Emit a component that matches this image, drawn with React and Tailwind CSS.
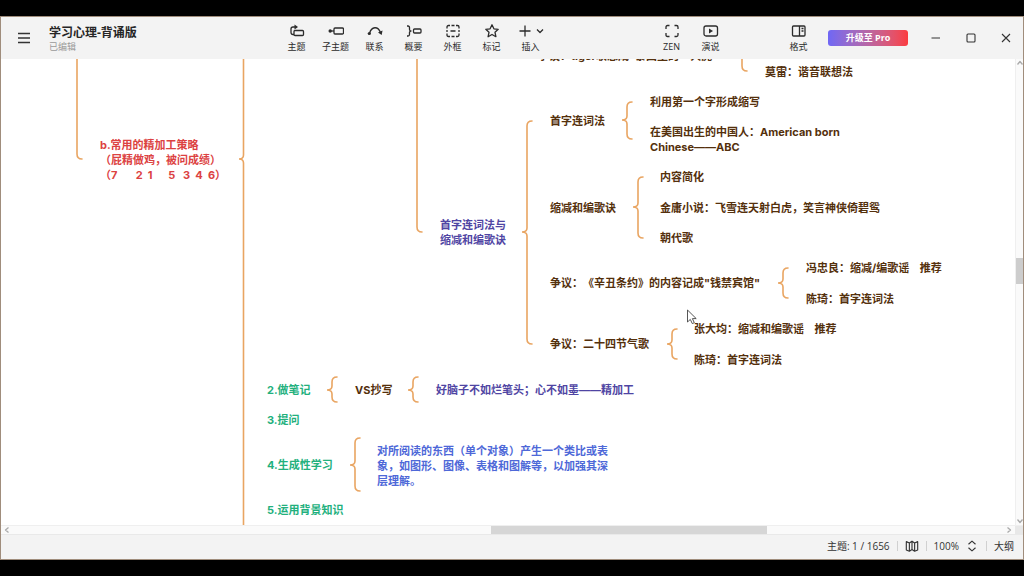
import React from 'react';

const nodeColors = {
  brown: 'text-[#54300c]',
  purple: 'text-[#4f45a3]',
  blue: 'text-[#4e68d8]',
  green: 'text-[#22b07d]',
  red: 'text-[#dc4242]',
};

// x, y: top left corner of the topic on the canvas
const topics = [
  { x: 537, y: -10, color: 'brown', lines: ['争议：tiger联想成"泰国里的"  大虎'] },
  { x: 764, y: 6, color: 'brown', lines: ['莫雷：谐音联想法'] },
  { x: 549, y: 55, color: 'brown', lines: ['首字连词法'] },
  { x: 649, y: 36, color: 'brown', lines: ['利用第一个字形成缩写'] },
  { x: 649, y: 66, color: 'brown', lines: ['在美国出生的中国人：American born', 'Chinese——ABC'] },
  { x: 549, y: 142, color: 'brown', lines: ['缩减和编歌诀'] },
  { x: 659, y: 111, color: 'brown', lines: ['内容简化'] },
  { x: 659, y: 142, color: 'brown', lines: ['金庸小说：飞雪连天射白虎，笑言神侠倚碧鸳'] },
  { x: 659, y: 172, color: 'brown', lines: ['朝代歌'] },
  { x: 439, y: 159, color: 'purple', lines: ['首字连词法与', '缩减和编歌诀'] },
  { x: 549, y: 217, color: 'brown', lines: ['争议：《辛丑条约》的内容记成"钱禁宾馆"'] },
  { x: 805, y: 202, color: 'brown', lines: ['冯忠良：缩减/编歌谣    推荐'] },
  { x: 805, y: 233, color: 'brown', lines: ['陈琦：首字连词法'] },
  { x: 549, y: 278, color: 'brown', lines: ['争议：二十四节气歌'] },
  { x: 693, y: 263, color: 'brown', lines: ['张大均：缩减和编歌谣    推荐'] },
  { x: 693, y: 294, color: 'brown', lines: ['陈琦：首字连词法'] },
  { x: 99, y: 79, color: 'red', lines: ['b.常用的精加工策略', '（屁精做鸡，被问成绩）', '（7       2  1      5   3  4  6）'] },
  { x: 266, y: 324, color: 'green', lines: ['2.做笔记'] },
  { x: 354, y: 324, color: 'brown', lines: ['VS抄写'] },
  { x: 435, y: 324, color: 'purple', lines: ['好脑子不如烂笔头；心不如墨——精加工'] },
  { x: 266, y: 354, color: 'green', lines: ['3.提问'] },
  { x: 266, y: 399, color: 'green', lines: ['4.生成性学习'] },
  { x: 376, y: 385, color: 'blue', lines: ['对所阅读的东西（单个对象）产生一个类比或表', '象，如图形、图像、表格和图解等，以加强其深', '层理解。'] },
  { x: 266, y: 444, color: 'green', lines: ['5.运用背景知识'] },
];

// x: stem, tip: height of the point on the left
const braces = [
  { x: 526, top: 62, tip: 173, bottom: 285 },
  { x: 626, top: 43, tip: 61, bottom: 80 },
  { x: 637, top: 118, tip: 148, bottom: 179 },
  { x: 782, top: 209, tip: 224, bottom: 239 },
  { x: 671, top: 270, tip: 285, bottom: 300 },
  { x: 331, top: 318, tip: 331, bottom: 343 },
  { x: 412, top: 318, tip: 331, bottom: 343 },
  { x: 354, top: 379, tip: 406, bottom: 432 },
];

const bracePath = ({ x, top, tip, bottom }) =>
  `M${x + 5} ${top}Q${x} ${top} ${x} ${top + 5}V${tip - 4}Q${x} ${tip} ${x - 5} ${tip}` +
  `Q${x} ${tip} ${x} ${tip + 4}V${bottom - 5}Q${x} ${bottom} ${x + 5} ${bottom}`;

const Icon = ({ children, className = 'w-4 h-4', box = '0 0 16 16' }) => (
  <svg viewBox={box} className={className} fill="none" stroke="currentColor" strokeWidth="1.3" strokeLinejoin="round" aria-hidden="true">
    {children}
  </svg>
);

const editTools = [
  {
    label: '主题',
    icon: <><rect x="5" y="7.500" width="9.500" height="5" rx="1" /><path d="M5 11.500H4Q2 11.500 2 9.500V6Q2 4 4 4H6" /><path d="M5.500 1.500L9 4L5.500 6.500Z" fill="currentColor" stroke="none" /></>,
  },
  {
    label: '子主题',
    icon: <><rect x="6" y="5" width="9.500" height="6" rx="1" /><circle cx="2.200" cy="8" r="1.700" fill="currentColor" stroke="none" /><path d="M2 8H6" /></>,
  },
  {
    label: '联系',
    icon: <><path d="M2.500 10.500C4.500 3 11 3 13.500 9.500" /><circle cx="2.300" cy="10.500" r="1.600" fill="currentColor" stroke="none" /><path d="M11 9.500L15.500 7.500L14.700 12Z" fill="currentColor" stroke="none" /></>,
  },
  {
    label: '概要',
    icon: <><path d="M1 3H2Q3.500 3 3.500 4.500V6.500Q3.500 8 5 8Q3.500 8 3.500 9.500V11.500Q3.500 13 2 13H1" /><rect x="7.500" y="6" width="7.500" height="4" rx="1" /></>,
  },
  {
    label: '外框',
    icon: <path d="M5 2.500H3.500Q2 2.500 2 4V5.500M11 2.500H12.500Q14 2.500 14 4V5.500M5 13.500H3.500Q2 13.500 2 12V10.500M11 13.500H12.500Q14 13.500 14 12V10.500M6.500 2.500H9.500M6.500 13.500H9.500M2 7V9M14 7V9M5.500 8H10.500" />,
  },
  {
    label: '标记',
    icon: <path d="M8 1.800L9.900 5.800L14.200 6.300L11 9.300L11.900 13.700L8 11.500L4.100 13.700L5 9.300L1.800 6.300L6.100 5.800Z" />,
  },
  {
    label: '插入',
    wide: true,
    icon: <path d="M8 2.500V13.500M2.500 8H13.500M20 6.500L23 9.500L26 6.500" />,
  },
];

const viewTools = [
  {
    label: 'ZEN',
    icon: <path d="M5.500 2.500H3.500Q2 2.500 2 4V6M10.500 2.500H12.500Q14 2.500 14 4V6M5.500 13.500H3.500Q2 13.500 2 12V10M10.500 13.500H12.500Q14 13.500 14 12V10" />,
  },
  {
    label: '演说',
    icon: <><rect x="1" y="3" width="13.500" height="10" rx="2" /><path d="M6 5.500L10 8L6 10.500Z" fill="currentColor" stroke="none" /></>,
  },
];

const formatTool = {
  label: '格式',
  icon: <><rect x="1.500" y="3" width="12.500" height="10" rx="1" /><path d="M8.500 3V13M10.500 5.500H12.500M10.500 8H12.500" /></>,
};

const ToolButton = ({ tool }) => (
  <button type="button" className="flex w-[39px] shrink-0 flex-col items-center pt-0.5 text-[#2b2b2b]">
    {tool.wide ? (
      <Icon className="h-4 w-7" box="0 0 28 16">{tool.icon}</Icon>
    ) : (
      <Icon>{tool.icon}</Icon>
    )}
    <span className="text-[9px] leading-4">{tool.label}</span>
  </button>
);

const Header = () => (
  <header className="flex h-[42px] shrink-0 items-center bg-[#f3f3f3]">
    <div className="flex w-[276px] shrink-0 items-center pl-3.5">
      <button type="button" aria-label="菜单" className="text-[#333]">
        <Icon className="h-5 w-5" box="0 0 20 20"><path d="M3 5.500H15M3 10H15M3 14.500H15" /></Icon>
      </button>
      <div className="ml-3.5 pt-0.5">
        <h1 className="text-[12px] font-bold leading-4 text-[#262626]">学习心理-背诵版</h1>
        <p className="text-[9px] leading-3 text-[#999]">已编辑</p>
      </div>
    </div>
    <nav className="flex">
      {editTools.map((tool) => <ToolButton key={tool.label} tool={tool} />)}
    </nav>
    <div className="ml-[102px] flex">
      {viewTools.map((tool) => <ToolButton key={tool.label} tool={tool} />)}
    </div>
    <div className="ml-auto flex items-center">
      <ToolButton tool={formatTool} />
      <button type="button" className="ml-2.5 h-4 w-20 rounded-[3px] bg-linear-to-r from-[#6f67f5] to-[#fb3a3e] text-[9px] font-bold leading-4 text-white">
        升级至 Pro
      </button>
      <div className="ml-2.5 flex text-[#333]">
        <button type="button" aria-label="最小化" className="flex w-[35px] justify-center">
          <Icon><path d="M3.500 8H12" strokeWidth="1" /></Icon>
        </button>
        <button type="button" aria-label="最大化" className="flex w-[35px] justify-center">
          <Icon><rect x="4" y="4" width="8" height="8" rx="1" strokeWidth="1.1" /></Icon>
        </button>
        <button type="button" aria-label="关闭" className="flex w-[35px] justify-center">
          <Icon><path d="M4 4L12 12M12 4L4 12" strokeWidth="1.1" /></Icon>
        </button>
      </div>
    </div>
  </header>
);

const MindMap = () => (
  <main className="relative min-w-0 flex-1 overflow-hidden bg-white font-['Inter','Noto_Sans_CJK_SC',sans-serif] [text-spacing-trim:space-all]">
    {/* Connectors */}
    <svg className="absolute left-0 top-0 h-full w-full" fill="none" stroke="#e9a562" strokeWidth="1.6" strokeLinecap="round" aria-hidden="true">
      <path d="M76 -5V95Q76 100 81 100" />
      <path d="M242.500 -5V96Q242.500 100 238 100Q242.500 100 242.500 104V1200" />
      <path d="M416 -5V168Q416 173 421 173" />
      <path d="M741 -5V7Q741 12 746 12" />
      {braces.map((brace) => <path key={`${brace.x}-${brace.top}`} d={bracePath(brace)} />)}
    </svg>

    {/* Topics */}
    {topics.map((topic) => (
      <div
        key={`${topic.x}-${topic.y}`}
        className={`absolute whitespace-pre text-[11px] font-bold leading-[15px] ${nodeColors[topic.color]}`}
        style={{ left: topic.x, top: topic.y }}
      >
        {topic.lines.map((line) => <p key={line}>{line}</p>)}
      </div>
    ))}

    {/* Mouse pointer */}
    <svg className="absolute left-[685px] top-[250px] h-4 w-3" viewBox="0 0 12 16" fill="#fff" stroke="#444" strokeWidth="0.9" strokeLinejoin="round" aria-hidden="true">
      <path d="M1.500 1V13L4.300 10.400L6.300 14.600L8.300 13.700L6.400 9.600H10.200Z" />
    </svg>
  </main>
);

const StatusBar = () => (
  <footer className="flex h-[25px] shrink-0 items-center justify-end gap-[7px] border-t border-[#e9e9e9] bg-[#f3f3f3] pb-0.5 pr-[9px] text-[10px] text-[#333]">
    <span>主题: 1 / 1656</span>
    <span className="h-2.5 w-px bg-[#d0d0d0]" />
    <button type="button" aria-label="导航图">
      <Icon className="h-3.5 w-3.5"><path d="M1.500 3L5 4.500L8 2.500L11 4.500L14.500 3V12.500L11 14L8 12L5 14L1.500 12.500ZM5 4.500V14M8 2.500V12M11 4.500V14" /></Icon>
    </button>
    <span className="h-2.5 w-px bg-[#d0d0d0]" />
    <button type="button" className="flex items-center gap-1.5">
      100%
      <Icon className="h-3.5 w-3.5"><path d="M4 6L8 2.500L12 6M4 10L8 13.500L12 10" /></Icon>
    </button>
    <span className="h-2.5 w-px bg-[#d0d0d0]" />
    <button type="button">大纲</button>
  </footer>
);

export default function App() {
  return (
    <div className="flex min-h-screen flex-col bg-black py-4 font-['Open_Sans','Noto_Sans_CJK_SC',sans-serif]">
      <div className="flex flex-1 flex-col border border-[#a08d7c]">
        <Header />
        <div className="flex flex-1">
          <MindMap />
          {/* Vertical scrollbar */}
          <div className="flex w-2 flex-col items-center border-l border-[#efefef] bg-[#fafafa] text-[#aaa]">
            <Icon className="h-2 w-2" box="0 0 8 8"><path d="M1.500 5.500L4 2.500L6.500 5.500" /></Icon>
            <div className="flex-[9]" />
            <div className="h-[26px] w-full bg-[#cdcdcd]" />
            <div className="flex-[11]" />
            <Icon className="h-2 w-2" box="0 0 8 8"><path d="M1.500 2.500L4 5.500L6.500 2.500" /></Icon>
          </div>
        </div>
        {/* Horizontal scrollbar */}
        <div className="flex h-[9px] shrink-0 items-center border-t border-[#efefef] bg-[#fafafa] text-[#aaa]">
          <Icon className="ml-0.5 h-2 w-2" box="0 0 8 8"><path d="M5.500 1.500L2.500 4L5.500 6.500" /></Icon>
          <div className="ml-[47%] h-full w-[27%] bg-[#d6d6d6]" />
          <Icon className="ml-auto h-2 w-2" box="0 0 8 8"><path d="M2.500 1.500L5.500 4L2.500 6.500" /></Icon>
          <div className="ml-0.5 h-full w-2 bg-[#e8e8e8]" />
        </div>
        <StatusBar />
      </div>
    </div>
  );
}
